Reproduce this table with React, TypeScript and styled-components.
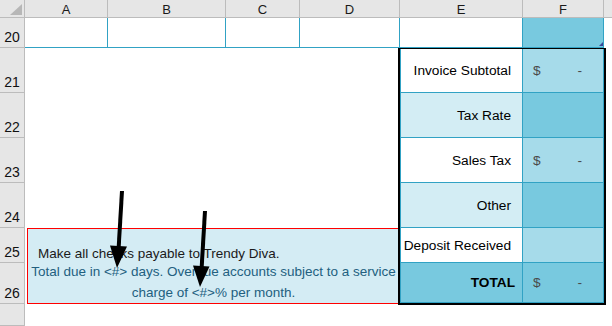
import React from 'react';
import styled, { createGlobalStyle } from 'styled-components';

const GRID_LINE = '#bcbcbc';
const CYAN = '#31a2c4';
const TONES = {
  white: '#ffffff',
  light: '#d3edf4',
  mid: '#a6dbea',
  dark: '#78c9df',
};

type Tone = keyof typeof TONES;

interface TotalRow {
  label: string;
  labelTone: Tone;
  amountTone: Tone;
  showAmount: boolean;
  bold?: boolean;
}

const totalRows: TotalRow[] = [
  { label: 'Invoice Subtotal', labelTone: 'white', amountTone: 'mid', showAmount: true },
  { label: 'Tax Rate', labelTone: 'light', amountTone: 'dark', showAmount: false },
  { label: 'Sales Tax', labelTone: 'white', amountTone: 'mid', showAmount: true },
  { label: 'Other', labelTone: 'light', amountTone: 'dark', showAmount: false },
  { label: 'Deposit Received', labelTone: 'white', amountTone: 'mid', showAmount: false },
  { label: 'TOTAL', labelTone: 'dark', amountTone: 'dark', showAmount: true, bold: true },
];

const columns = ['A', 'B', 'C', 'D', 'E', 'F', ''];
const rowNumbers = ['20', '21', '22', '23', '24', '25', '26', ''];

export default function App() {
  return (
    <>
      <GlobalStyle />
      <Sheet>
        <Corner />
        {columns.map((name, i) => (
          <ColHeader key={i} $col={i + 2} $last={i === columns.length - 1}>
            {name}
          </ColHeader>
        ))}
        {rowNumbers.map((num, i) => (
          <RowHeader key={i} $row={i + 2}>
            {num}
          </RowHeader>
        ))}

        {[2, 3, 4, 5, 6].map((col) => (
          <TopCell key={col} $col={col} />
        ))}
        <TopCell $col={7} $fill={TONES.dark}>
          <FillHandle />
        </TopCell>

        <Note>
          <NoteLead>Make all checks payable to Trendy Diva.</NoteLead>
          <NoteTerms>
            Total due in &lt;#&gt; days. Overdue accounts subject to a service
            <br />
            charge of &lt;#&gt;% per month.
          </NoteTerms>
        </Note>

        <Totals>
          {totalRows.map((row) => (
            <React.Fragment key={row.label}>
              <LabelCell $tone={row.labelTone} $bold={row.bold}>
                {row.label}
              </LabelCell>
              <AmountCell $tone={row.amountTone}>
                {row.showAmount && (
                  <>
                    <span>$</span>
                    <span>-</span>
                  </>
                )}
              </AmountCell>
            </React.Fragment>
          ))}
        </Totals>

        <Arrows viewBox='0 0 612 326'>
          <line x1='122' y1='191' x2='118.5' y2='250' stroke='#000' strokeWidth='4' />
          <polygon points='110,245.4 127,246.6 117,268' fill='#000' />
          <line x1='205' y1='211' x2='201.5' y2='270' stroke='#000' strokeWidth='4' />
          <polygon points='193,265.5 209.5,266.5 200,287' fill='#000' />
        </Arrows>
      </Sheet>
    </>
  );
}

const GlobalStyle = createGlobalStyle`
  html, body {
    margin: 0;
    padding: 0;
    background: #ffffff;
  }
  body {
    width: 612px;
    height: 326px;
    overflow: hidden;
    font-family: 'Liberation Sans', Arial, sans-serif;
  }
`;

const Sheet = styled.div`
  position: relative;
  display: grid;
  grid-template-columns: 25px 83px 118px 74px 100px 123px 81px 1fr;
  grid-template-rows: 18px 30px 45px 45px 45px 45px 35px 41px 1fr;
  width: 612px;
  height: 326px;
  background: #ffffff;
  overflow: hidden;
`;

const Corner = styled.div`
  position: relative;
  grid-column: 1;
  grid-row: 1;
  background: #e6e6e6;
  border-right: 1px solid ${GRID_LINE};
  border-bottom: 1px solid ${GRID_LINE};

  &::after {
    content: '';
    position: absolute;
    right: 2px;
    bottom: 2px;
    width: 0;
    height: 0;
    border-left: 12px solid transparent;
    border-bottom: 11px solid #b7b7b7;
  }
`;

const ColHeader = styled.div<{ $col: number; $last?: boolean }>`
  grid-column: ${({ $col }) => $col};
  grid-row: 1;
  display: flex;
  align-items: center;
  justify-content: center;
  padding-top: 1px;
  background: #e6e6e6;
  border-right: ${({ $last }) => ($last ? 'none' : `1px solid ${GRID_LINE}`)};
  border-bottom: 1px solid ${GRID_LINE};
  font-size: 13px;
  color: #1a1a1a;
`;

const RowHeader = styled.div<{ $row: number }>`
  grid-column: 1;
  grid-row: ${({ $row }) => $row};
  display: flex;
  align-items: flex-end;
  justify-content: center;
  padding-bottom: 2px;
  background: #e6e6e6;
  border-right: 1px solid ${GRID_LINE};
  border-bottom: 1px solid ${GRID_LINE};
  font-size: 14px;
  line-height: 16px;
  color: #111111;
`;

const TopCell = styled.div<{ $col: number; $fill?: string }>`
  position: relative;
  grid-column: ${({ $col }) => $col};
  grid-row: 2;
  background: ${({ $fill }) => $fill || '#ffffff'};
  border-right: 1px solid ${CYAN};
  border-bottom: 1px solid ${CYAN};
`;

const FillHandle = styled.span`
  position: absolute;
  right: 0;
  bottom: 1px;
  width: 0;
  height: 0;
  border-left: 4px solid transparent;
  border-bottom: 4px solid #3a4596;
`;

const Note = styled.div`
  grid-column: 2 / 6;
  grid-row: 7 / 9;
  margin-left: 2px;
  display: grid;
  grid-template-rows: 34px 40px;
  border: 1px solid #ff0000;
  background: #d4ecf4;
  font-size: 13.5px;
  white-space: nowrap;
`;

const NoteLead = styled.div`
  align-self: end;
  padding-left: 10px;
  line-height: 18px;
  color: #1a1a1a;
`;

const NoteTerms = styled.div`
  align-self: end;
  text-align: center;
  line-height: 20.5px;
  color: #22607f;
`;

const Totals = styled.div`
  position: relative;
  z-index: 1;
  grid-column: 6 / 8;
  grid-row: 3 / 9;
  margin: 0 -2px -1px -2px;
  display: grid;
  grid-template-columns: 123px 81px;
  grid-template-rows: 44px 45px 45px 45px 35px 40px;
  border: 2px solid #000000;
  border-top-width: 1px;
  background: #ffffff;
  font-size: 13.7px;
`;

const LabelCell = styled.div<{ $tone: Tone; $bold?: boolean }>`
  display: flex;
  align-items: center;
  justify-content: flex-end;
  padding-right: ${({ $bold }) => ($bold ? '7px' : '11px')};
  background: ${({ $tone }) => TONES[$tone]};
  border-left: 1px solid ${CYAN};
  border-right: 1px solid ${CYAN};
  border-bottom: 1px solid ${CYAN};
  font-weight: ${({ $bold }) => ($bold ? 700 : 400)};
  color: #000000;
  white-space: nowrap;
`;

const AmountCell = styled.div<{ $tone: Tone }>`
  display: flex;
  align-items: center;
  justify-content: space-between;
  padding: 0 21px 0 10px;
  background: ${({ $tone }) => TONES[$tone]};
  border-right: 1px solid ${CYAN};
  border-bottom: 1px solid ${CYAN};
  color: #4a4a4a;
`;

const Arrows = styled.svg`
  position: absolute;
  top: 0;
  left: 0;
  width: 612px;
  height: 326px;
  z-index: 2;
  pointer-events: none;
`;
